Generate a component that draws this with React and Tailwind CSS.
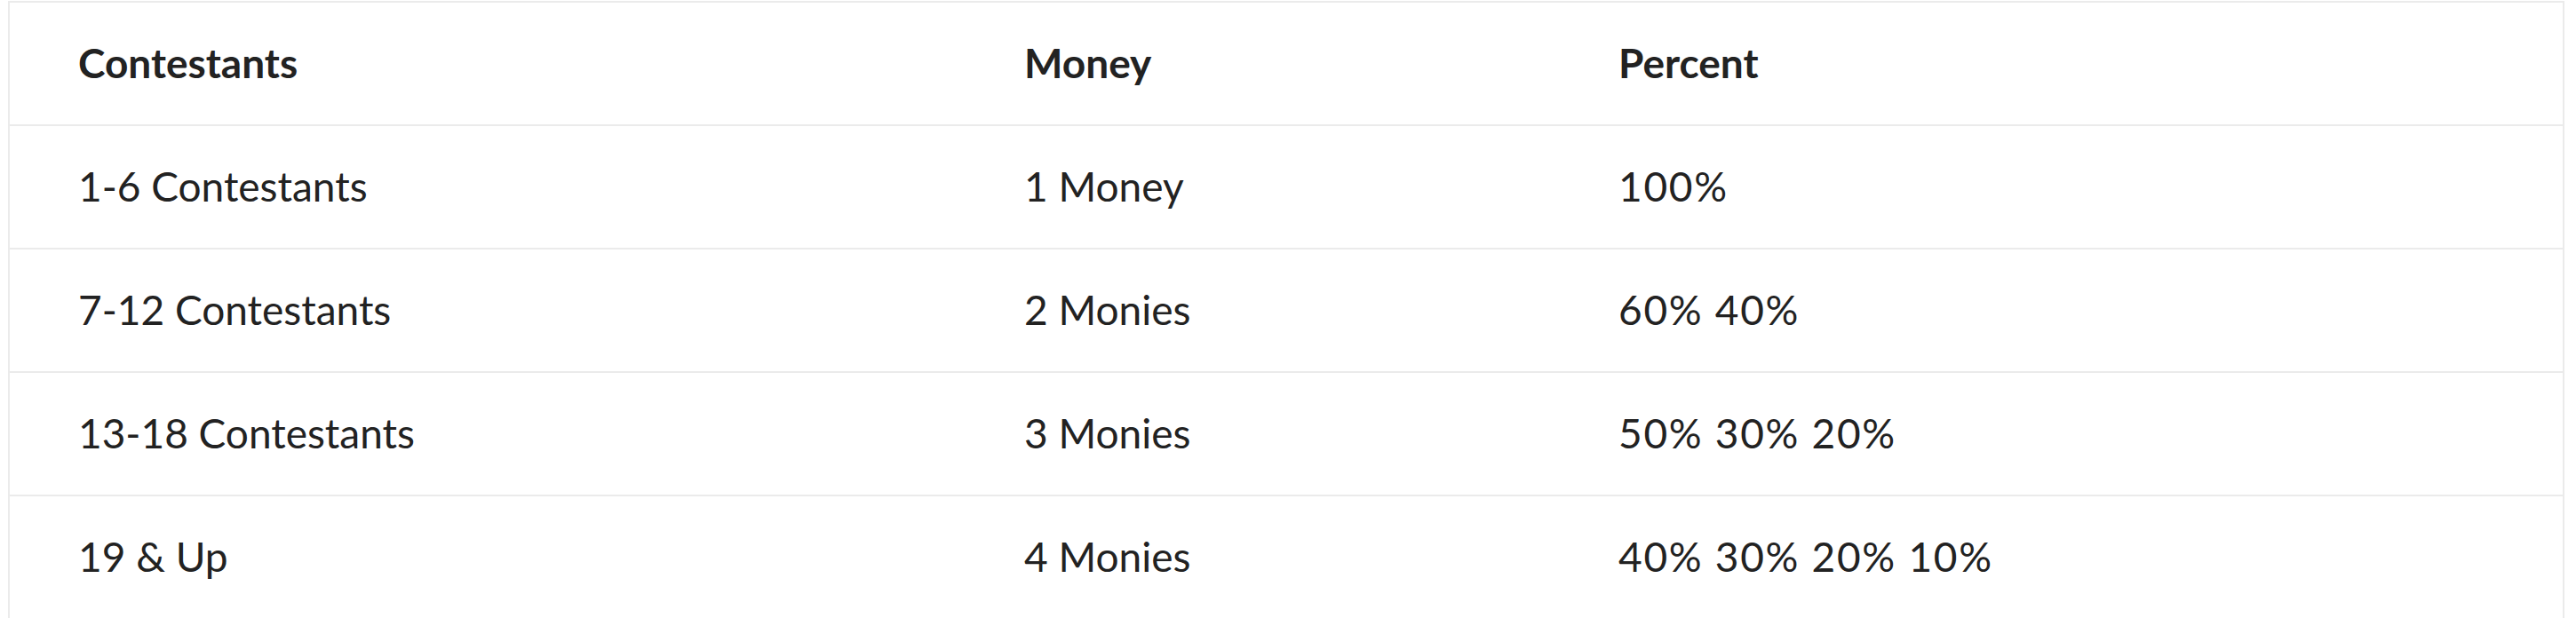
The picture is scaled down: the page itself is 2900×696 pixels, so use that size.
import React from 'react';

const rows = [
  { contestants: '1-6 Contestants', money: '1 Money', percent: '100%' },
  { contestants: '7-12 Contestants', money: '2 Monies', percent: '60% 40%' },
  { contestants: '13-18 Contestants', money: '3 Monies', percent: '50% 30% 20%' },
  { contestants: '19 & Up', money: '4 Monies', percent: '40% 30% 20% 10%' },
];

const App = () => {
  return (
    <div className="w-[2900px] h-[696px] overflow-hidden bg-white pt-px pl-[9px]">
      <table
        className="w-[2878px] border-collapse border-2 border-[#ebebeb] text-[46px] text-[#222222] table-fixed"
        style={{ fontFamily: 'Lato, "Noto Sans", sans-serif' }}
      >
        <colgroup>
          <col className="w-[1066px]" />
          <col className="w-[669px]" />
          <col />
        </colgroup>
        <thead>
          <tr className="h-[139px] border-b-2 border-[#ebebeb]">
            <th className="pl-[77px] pb-[3px] text-left font-bold">Contestants</th>
            <th className="pl-[77px] pb-[3px] text-left font-bold">Money</th>
            <th className="pl-[77px] pb-[3px] text-left font-bold">Percent</th>
          </tr>
        </thead>
        <tbody>
          {rows.map((row) => (
            <tr key={row.contestants} className="h-[139px] border-b-2 border-[#ebebeb]">
              <td className="pl-[77px] pb-[3px]">{row.contestants}</td>
              <td className="pl-[77px] pb-[3px]">{row.money}</td>
              <td className="pl-[77px] pb-[3px] tracking-[1.7px]">{row.percent}</td>
            </tr>
          ))}
        </tbody>
      </table>
    </div>
  );
};

export default App;
